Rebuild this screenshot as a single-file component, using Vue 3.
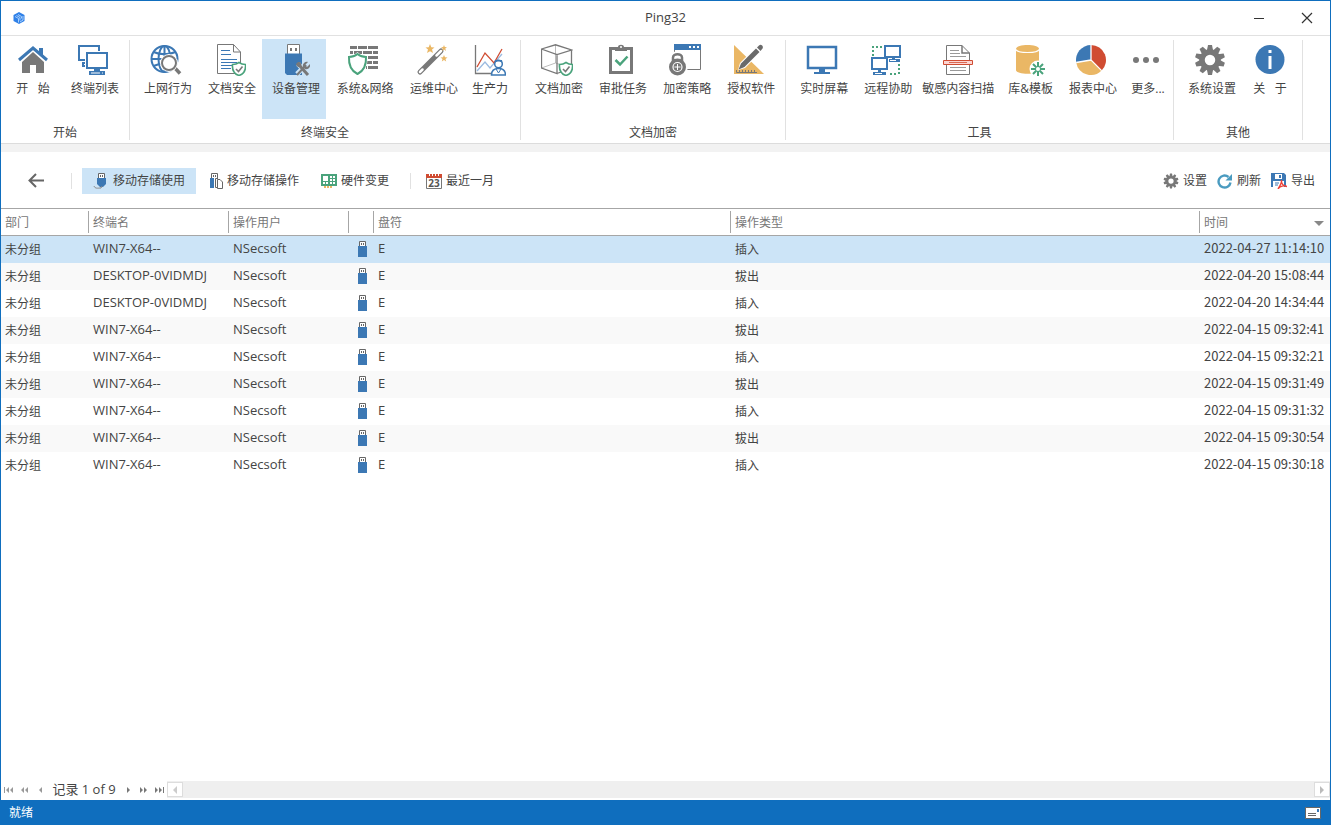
<template>
  <div class="window">
    <header class="title-bar">
      <svg class="logo" viewBox="0 0 16 16" v-html="icons.logo"></svg>
      <h1>Ping32</h1>
      <div class="window-actions">
        <button type="button" aria-label="最小化">
          <svg viewBox="0 0 12 12"><path d="M1 6.500H11" stroke="#333" /></svg>
        </button>
        <button type="button" aria-label="关闭">
          <svg viewBox="0 0 12 12"><path d="M1 1L11 11M11 1L1 11" stroke="#333" stroke-width="1.2" /></svg>
        </button>
      </div>
    </header>

    <nav class="ribbon">
      <section v-for="group in groups" :key="group.name" class="ribbon-group">
        <div class="ribbon-items">
          <button
            v-for="item in group.items"
            :key="item.label"
            type="button"
            class="ribbon-btn"
            :class="[item.kind, { active: activeMenu === item.label }]"
            @click="activeMenu = item.label"
          >
            <svg viewBox="0 0 32 32" v-html="icons[item.icon]"></svg>
            <span>{{ item.label }}</span>
          </button>
        </div>
        <div class="ribbon-caption">{{ group.name }}</div>
      </section>
    </nav>

    <main class="content">
      <div class="toolbar">
        <button type="button" class="back-btn" aria-label="返回">
          <svg viewBox="0 0 18 18"><path d="M17 8.500H3M9 2L2.500 8.500L9 15" fill="none" stroke="#666" stroke-width="2" /></svg>
        </button>
        <span class="divider"></span>
        <button
          v-for="tab in tabs"
          :key="tab.label"
          type="button"
          class="tool-btn"
          :class="{ active: activeTab === tab.label }"
          @click="activeTab = tab.label"
        >
          <svg viewBox="0 0 16 16" v-html="icons[tab.icon]"></svg>
          <span>{{ tab.label }}</span>
        </button>
        <span class="divider range-divider"></span>
        <button type="button" class="tool-btn">
          <svg viewBox="0 0 16 16" v-html="icons.calendar"></svg>
          <span>最近一月</span>
        </button>
        <div class="toolbar-right">
          <button v-for="action in actions" :key="action.label" type="button" class="tool-btn small">
            <svg :viewBox="action.box" v-html="icons[action.icon]"></svg>
            <span>{{ action.label }}</span>
          </button>
        </div>
      </div>

      <table class="records">
        <colgroup>
          <col class="col-dept" />
          <col class="col-host" />
          <col class="col-user" />
          <col class="col-icon" />
          <col class="col-drive" />
          <col />
          <col class="col-time" />
        </colgroup>
        <thead>
          <tr>
            <th><span>部门</span></th>
            <th><span>终端名</span></th>
            <th><span>操作用户</span></th>
            <th><span></span></th>
            <th><span>盘符</span></th>
            <th><span>操作类型</span></th>
            <th><span>时间<i class="sort"></i></span></th>
          </tr>
        </thead>
        <tbody>
          <tr
            v-for="(row, index) in rows"
            :key="row.time"
            :class="{ selected: selectedRow === index }"
            @click="selectedRow = index"
          >
            <td>未分组</td>
            <td class="latin">{{ row.host }}</td>
            <td class="latin">NSecsoft</td>
            <td class="usb-cell"><svg viewBox="0 0 9 16" v-html="icons.usb"></svg></td>
            <td class="latin">E</td>
            <td>{{ row.type }}</td>
            <td class="latin time">{{ row.time }}</td>
          </tr>
        </tbody>
      </table>
    </main>

    <div class="pager">
      <div class="pager-nav">
        <button v-for="nav in pagerBefore" :key="nav.label" type="button" :aria-label="nav.label">
          <svg viewBox="0 0 10 8"><path :d="nav.path" fill="#999" /></svg>
        </button>
        <span class="pager-text">记录 {{ selectedRow + 1 }} of {{ rows.length }}</span>
        <button v-for="nav in pagerAfter" :key="nav.label" type="button" :aria-label="nav.label">
          <svg viewBox="0 0 10 8"><path :d="nav.path" fill="#777" /></svg>
        </button>
      </div>
      <div class="scrollbar">
        <button type="button" aria-label="向左滚动">
          <svg viewBox="0 0 8 8"><path d="M6 0V8L2 4Z" fill="#ccc" /></svg>
        </button>
        <button type="button" aria-label="向右滚动">
          <svg viewBox="0 0 8 8"><path d="M2 0V8L6 4Z" fill="#bbb" /></svg>
        </button>
      </div>
    </div>

    <footer class="status-bar">
      <span>就绪</span>
      <svg viewBox="0 0 16 12" v-html="icons.card"></svg>
    </footer>
  </div>
</template>

<script setup>
import { ref } from 'vue';

const activeMenu = ref('设备管理');
const activeTab = ref('移动存储使用');
const selectedRow = ref(0);

const groups = [
  {
    name: '开始',
    items: [
      { label: '开   始', icon: 'home', kind: 'short' },
      { label: '终端列表', icon: 'terminals' }
    ]
  },
  {
    name: '终端安全',
    items: [
      { label: '上网行为', icon: 'web' },
      { label: '文档安全', icon: 'docSafe' },
      { label: '设备管理', icon: 'device' },
      { label: '系统&网络', icon: 'network', kind: 'wide' },
      { label: '运维中心', icon: 'wand' },
      { label: '生产力', icon: 'chart', kind: 'centered' }
    ]
  },
  {
    name: '文档加密',
    items: [
      { label: '文档加密', icon: 'cube' },
      { label: '审批任务', icon: 'clipboard' },
      { label: '加密策略', icon: 'policy' },
      { label: '授权软件', icon: 'license' }
    ]
  },
  {
    name: '工具',
    items: [
      { label: '实时屏幕', icon: 'screen' },
      { label: '远程协助', icon: 'remote' },
      { label: '敏感内容扫描', icon: 'scan', kind: 'long' },
      { label: '库&模板', icon: 'library' },
      { label: '报表中心', icon: 'pie' },
      { label: '更多...', icon: 'more', kind: 'compact' }
    ]
  },
  {
    name: '其他',
    items: [
      { label: '系统设置', icon: 'gear' },
      { label: '关   于', icon: 'about', kind: 'short' }
    ]
  }
];

const tabs = [
  { label: '移动存储使用', icon: 'usbPlug' },
  { label: '移动存储操作', icon: 'usbCopy' },
  { label: '硬件变更', icon: 'hardware' }
];

const actions = [
  { label: '设置', icon: 'gear', box: '0 0 32 32' },
  { label: '刷新', icon: 'refresh', box: '0 0 16 16' },
  { label: '导出', icon: 'export', box: '0 0 16 16' }
];

const rows = [
  { host: 'WIN7-X64--', type: '插入', time: '2022-04-27 11:14:10' },
  { host: 'DESKTOP-0VIDMDJ', type: '拔出', time: '2022-04-20 15:08:44' },
  { host: 'DESKTOP-0VIDMDJ', type: '插入', time: '2022-04-20 14:34:44' },
  { host: 'WIN7-X64--', type: '拔出', time: '2022-04-15 09:32:41' },
  { host: 'WIN7-X64--', type: '插入', time: '2022-04-15 09:32:21' },
  { host: 'WIN7-X64--', type: '拔出', time: '2022-04-15 09:31:49' },
  { host: 'WIN7-X64--', type: '插入', time: '2022-04-15 09:31:32' },
  { host: 'WIN7-X64--', type: '拔出', time: '2022-04-15 09:30:54' },
  { host: 'WIN7-X64--', type: '插入', time: '2022-04-15 09:30:18' }
];

const pagerBefore = [
  { label: '第一条', path: 'M0 1H1V7H0ZM5 1V7L2 4ZM9 1V7L6 4Z' },
  { label: '上一页', path: 'M4 1V7L1 4ZM8 1V7L5 4Z' },
  { label: '上一条', path: 'M6 1V7L3 4Z' }
];
const pagerAfter = [
  { label: '下一条', path: 'M5 1V7L8 4Z' },
  { label: '下一页', path: 'M2 1V7L5 4ZM6 1V7L9 4Z' },
  { label: '最后一条', path: 'M1 1V7L4 4ZM5 1V7L8 4ZM9 1H10V7H9Z' }
];

const blue = '#3c78b4';
const gray = '#787878';
const green = '#4aa37c';
const sand = '#eab765';
const red = '#d04c32';

const teeth = Array.from({ length: 10 }, (_, i) =>
  `<path d="M12.800 7L14 1H18L19.200 7Z" transform="rotate(${i * 36} 16 16)"/>`
).join('');

// small shield used as a badge on several icons
const badge = `<path d="M25 18.500C27 20 29 20.500 31.500 20.500C32 26 29.500 30 25 31.500C20.500 30 18 26 18.500 20.500C21 20.500 23 20 25 18.500Z" fill="#fff" stroke="${green}" stroke-width="1.600"/><path d="M22 25L24.500 27.500L28.500 22.500" fill="none" stroke="${gray}" stroke-width="1.600"/>`;

const icons = {
  logo: `<path d="M8 2L13.500 5V11L8 14L2.500 11V5Z" fill="#2f80e8"/><path d="M4 6.500L7.500 8.500V12.500M5.500 5.500L9 7.500V10.500M7 4.500L10.500 6.500V8.500M12 6V10L9 12" fill="none" stroke="#a9d0fb"/>`,
  home: `<path d="M5 18L16 8L27 18V29H19V21H13V29H5Z" fill="${gray}"/><path d="M2 16L16 4L30 16" fill="none" stroke="${blue}" stroke-width="3"/><path d="M22 4H26V12L22 9Z" fill="${blue}"/>`,
  terminals: `<path d="M8 16H2V2H22V7" fill="none" stroke="${blue}" stroke-width="2"/><path d="M8 19H6V22H8" fill="none" stroke="${blue}" stroke-width="2"/><path d="M10 9H30V24H10Z" fill="#fff" stroke="${blue}" stroke-width="2"/><path d="M17 24H23V27H28V31H12V27H17Z" fill="${blue}"/><path d="M14 29H26" stroke="#fff"/><circle cx="24" cy="29" r="1.200" fill="${blue}"/>`,
  web: `<g fill="none" stroke="${blue}" stroke-width="2"><circle cx="14.500" cy="15" r="13"/><ellipse cx="14.500" cy="15" rx="6" ry="13"/><path d="M1.500 15H27.500M3.500 8C10 11 19 11 25.500 8M3.500 22C8 20 13 19.500 18 20M14.500 2V28"/></g><path d="M24 23L30 29.500" stroke="${gray}" stroke-width="3.500"/><circle cx="19" cy="19" r="7.500" fill="#fff" stroke="#fff" stroke-width="3"/><circle cx="19" cy="19" r="7" fill="#fff" stroke="${gray}" stroke-width="2"/>`,
  docSafe: `<path d="M3.500 .5H19.500L26.500 8V29.500H3.500Z" fill="#fff" stroke="#777"/><path d="M19.500 .5V8H26.500" fill="none" stroke="#777"/><path d="M7 6.500H16M7 10.500H17M7 15.500H23M7 18.500H23M7 21.500H18M7 24.500H17" stroke="${blue}"/>${badge}`,
  device: `<path d="M9.500 11V.5H21.500V11" fill="#fff" stroke="${gray}"/><path d="M12 4H14V7H12ZM17 4H19V7H17Z" fill="${gray}"/><path d="M7 9.500H24V31H9L7 29Z" fill="${blue}"/><g stroke="#cce4f7" stroke-width="5" fill="none"><path d="M20 20L30 30M29 20L19 30"/></g><path d="M21 21L30 31" stroke="${gray}" stroke-width="3"/><path d="M28 21L19 31" stroke="${gray}" stroke-width="2"/><path d="M18 20L20 18C23 18 24 20 23 23L20 23C19 22 18 21 18 20Z" fill="${gray}"/><path d="M30 18L27 21L29 23L32 20C33 23 30 26 27 25L25 23C24 20 27 17 30 18Z" fill="${gray}"/>`,
  network: `<path d="M3 2H10V5H3ZM11 2H20V5H11ZM21 2H31V5H21ZM3 7H6V10H3ZM7 7H15V10H7ZM16 7H25V10H16ZM26 7H31V10H26ZM11 12H20V15H11ZM21 12H31V15H21ZM19 17H25V20H19ZM26 17H31V20H26ZM19 22H20V25H19ZM21 22H31V25H21Z" fill="${gray}"/><path d="M10.500 8C13 10.500 16 12 20.500 12C21 22 18 28 10.500 31C3 28 0 22 .5 12C5 12 8 10.500 10.500 8Z" fill="#fff"/><path d="M10.500 10C13 12 16 13 19 13C19.500 22 16.500 27 10.500 30C4.500 27 1.500 22 2 13C5 13 8 12 10.500 10Z" fill="#fff" stroke="${green}" stroke-width="2"/>`,
  wand: `<path d="M4 28L25 7" stroke="${gray}" stroke-width="5" stroke-linecap="round"/><path d="M4 28L6.500 25.500M20.500 11.500L25 7" stroke="#fff" stroke-width="2.500" stroke-linecap="round"/><g fill="${sand}"><path d="M14 0L15.300 3.200L18.500 3.500L16 5.600L17 9L14 7.200L11 9L12 5.600L9.500 3.500L12.700 3.200Z"/><path d="M28 1L28.800 3L31 3.200L29.300 4.600L30 7L28 5.600L26 7L26.700 4.600L25 3.200L27.200 3Z"/><path d="M28 11L29 13.200L31.500 13.500L29.500 15L30.200 17.500L28 16L25.800 17.500L26.500 15L24.500 13.500L27 13.200Z"/></g>`,
  chart: `<path d="M1.500 1V29.500H17" fill="none" stroke="${gray}" stroke-width="1.300"/><path d="M3 27L11 18L16 24L28 10" fill="none" stroke="#9cbbe0" stroke-width="1.300"/><path d="M3 23L11 9L20 19L28 5" fill="none" stroke="${red}" stroke-width="1.300"/><path d="M17.500 31C17.500 26 20 24.500 24.500 24.500C29 24.500 31.500 26 31.500 31Z" fill="#fff" stroke="${blue}" stroke-width="1.500"/><circle cx="24.500" cy="20" r="3.800" fill="#fff" stroke="${blue}" stroke-width="1.500"/><path d="M20.500 19C22 17 27 17 28.500 19L28 16H21Z" fill="${blue}"/><path d="M22 25L24.500 29L27 25" fill="none" stroke="${blue}"/>`,
  cube: `<path d="M14.500 1V19L.5 24M14.500 19L30 24" fill="none" stroke="#aaa" stroke-width=".8"/><path d="M.5 5L14.500 .8L30.500 6L16 10.500ZM.5 5V24L16 29.500V10.500M30.500 6V24L16 29.500" fill="none" stroke="${gray}" stroke-width="1.300"/>${badge}`,
  clipboard: `<path d="M5.500 4.500H26.500V28.500H5.500Z" fill="#fff" stroke="${gray}" stroke-width="3"/><path d="M10 7V3H13C13 0 19 0 19 3H22V7Z" fill="${gray}"/><circle cx="16" cy="3" r="1" fill="#fff"/><path d="M10.500 16L15 20.500L22.500 12.500" fill="none" stroke="${green}" stroke-width="2.500"/>`,
  policy: `<path d="M5.500 1V25.500H31.500V1" fill="#fff" stroke="${gray}"/><path d="M5 0H32V6H5Z" fill="${blue}"/><path d="M20 2H22V4H20ZM24 2H26V4H24ZM28 2H30V4H28Z" fill="#fff"/><circle cx="8.500" cy="22.500" r="10.500" fill="#fff"/><path d="M4 17V13C4 8.500 13 8.500 13 13V17" fill="none" stroke="#fff" stroke-width="5"/><path d="M4 17V13.500C4 9 13 9 13 13.500V17" fill="none" stroke="${gray}" stroke-width="2.500"/><circle cx="8.500" cy="23" r="8.500" fill="${gray}"/><circle cx="8.500" cy="23" r="4.500" fill="none" stroke="#fff" stroke-width="1.200"/><path d="M8.500 20V26M5.500 23H11.500" stroke="#fff"/>`,
  license: `<path d="M1 1V30H31Z" fill="${sand}"/><path d="M3.500 26V28.500H24M6.500 26V28M9.500 26V28M12.500 26V28M15.500 26V28M18.500 26V28M21.500 26V28" fill="none" stroke="${gray}"/><path d="M5 26L7 19L25 1L30 6L12 24Z" fill="#fff"/><path d="M5.500 25.500L8 19.500L23 4.500L26.500 8L11.500 23Z" fill="#6a6a6a"/><path d="M24 3.500L26 1.500C28 -.5 31 2.500 29.500 4.500L27.500 7Z" fill="#6a6a6a"/>`,
  screen: `<path d="M2 3H30V24H2Z" fill="#fff" stroke="${blue}" stroke-width="2.500"/><path d="M13 25H19V28H24V30H8V28H13Z" fill="${blue}"/>`,
  remote: `<g fill="none" stroke="${blue}" stroke-width="2"><path d="M15 2H30V13H15Z"/><path d="M2 14H17V25H2Z" fill="#fff"/></g><path d="M19 15H30V18H19ZM22 14H25V16H22ZM8 26H11V28H8ZM3 28H16V31H3Z" fill="${blue}"/><path d="M5 29.500H12M20 16.500H26" stroke="#fff"/><path d="M2 3H14M3 6V13" stroke="${green}" stroke-width="2" stroke-dasharray="2 2"/><path d="M29 20V31M20 30H28" stroke="${green}" stroke-width="2" stroke-dasharray="2 2"/>`,
  scan: `<path d="M4.500 1.500H20L27.500 9V30.500H4.500Z" fill="#fff" stroke="${gray}"/><path d="M20 1.500V9H27.500" fill="none" stroke="${gray}" stroke-width="1.500"/><path d="M8 6.500H17M8 9.500H18M8 12.500H24M8 23.500H24M8 26.500H24" stroke="#999"/><path d="M1.500 16.500H30.500V20.500H1.500Z" fill="#fcd5d2" stroke="${red}"/><path d="M7 18.500H25" stroke="${red}" stroke-width=".8"/>`,
  library: `<path d="M3 5C3 -.2 26 -.2 26 5V26C26 31 3 31 3 26Z" fill="${sand}"/><path d="M3 5.500C4 9.500 25 9.500 26 5.500" fill="none" stroke="#fff" stroke-width="1.200"/><circle cx="25" cy="25" r="8.500" fill="#fff"/><path d="M25 18V32M18 25H32M20 20L30 30M30 20L20 30" stroke="${green}" stroke-width="2"/><circle cx="25" cy="25" r="2" fill="#fff"/>`,
  pie: `<path d="M16 16V1A15 15 0 0 1 26.600 26.600Z" fill="${red}"/><path d="M16 16L26.600 26.600A15 15 0 0 1 1.200 18.500Z" fill="${sand}"/><path d="M16 16L1.200 18.500A15 15 0 0 1 16 1Z" fill="${blue}"/><path d="M16 1V16L26.600 26.600M16 16L1.200 18.500" fill="none" stroke="#fff" stroke-width="1.300"/>`,
  more: `<g fill="${gray}"><circle cx="6" cy="16" r="3"/><circle cx="16" cy="16" r="3"/><circle cx="26" cy="16" r="3"/></g>`,
  gear: `<g fill="${gray}">${teeth}</g><circle cx="16" cy="16" r="8" fill="none" stroke="${gray}" stroke-width="5.500"/>`,
  about: `<circle cx="16" cy="15.500" r="14.500" fill="${blue}"/><path d="M14.500 6H17.500V9H14.500ZM14.500 12H17.500V25H14.500Z" fill="#fff"/>`,
  usb: `<path d="M1.500 6V.5H7.500V6" fill="#fff" stroke="#666"/><path d="M3 2H4V4H3ZM5 2H6V4H5Z" fill="#666"/><path d="M0 5H9V16H0Z" fill="${blue}"/>`,
  usbPlug: `<path d="M5.500 6V.5H11.500V6" fill="#fff" stroke="#666"/><path d="M7 2H8V4H7ZM9 2H10V4H9Z" fill="#666"/><path d="M4 5H13V11L10 14H7L4 11Z" fill="${blue}"/><path d="M1 13C2 16 5 15 8 15L9 13" fill="none" stroke="#888"/>`,
  usbCopy: `<path d="M4.500 6V.5H10.500V6" fill="#fff" stroke="#666"/><path d="M6 2H7V4H6ZM8 2H9V4H8Z" fill="#666"/><path d="M3 5H9V15H3Z" fill="${blue}"/><path d="M7 5H16V16H7Z" fill="#fff"/><path d="M10 14.500H8.500V5.500H11M10.500 6.500H13L15.500 9V15.500H10.500Z" fill="#fff" stroke="#666"/>`,
  hardware: `<path d="M0 1H16V13H0Z" fill="${green}"/><path d="M2 3H7V8H2ZM9 3H11V5H9ZM12 3H14V5H12ZM9 6H11V8H9ZM12 6H14V8H12ZM2 9H4V11H2ZM5 9H7V11H5ZM9 9H11V11H9ZM12 9H14V11H12Z" fill="#fff"/><path d="M3 13H5V15H3ZM6 13H8V15H6ZM9 13H11V15H9Z" fill="${sand}"/>`,
  calendar: `<path d="M.5 3.500H15.500V15.500H.5Z" fill="#fff" stroke="#777"/><path d="M0 1H16V5H0Z" fill="${red}"/><path d="M3.500 0V3M6.500 0V3M9.500 0V3M12.500 0V3" stroke="#fff"/><text x="8" y="14" text-anchor="middle" font-family="Open Sans, sans-serif" font-size="10" font-weight="700" fill="#555">23</text>`,
  refresh: `<path d="M13.500 9.500A6 6 0 1 1 11.500 4" fill="none" stroke="#4a9bc0" stroke-width="2.400"/><path d="M15 1V7.500H8.500Z" fill="#4a9bc0"/>`,
  export: `<path d="M0 0H13L15 2V14H0Z" fill="${blue}"/><path d="M4 1H11V6H4Z" fill="#fff"/><path d="M8 2H10V5H8Z" fill="${blue}"/><path d="M2 8H13V14H2Z" fill="#fff"/><path d="M4 10H8M4 12H7" stroke="${blue}"/><path d="M7 16C9 13 11 10 10.500 7C10 11 13 13 16 13.500C13 12 9 13 7 16Z" fill="#fff" stroke="#ee4036" stroke-width="1.400"/>`,
  card: `<path d="M.5 .5H15.500V11.500H.5Z" fill="#fff" stroke="#666"/><path d="M12 2H14V5H12Z" fill="${blue}"/><path d="M3 6.500H11M3 8.500H11" stroke="#666"/>`
};
</script>

<style>
body {
  margin: 0;
}
</style>

<style scoped>
.window {
  display: flex;
  flex-direction: column;
  box-sizing: border-box;
  min-height: 100vh;
  border: 1px solid #0f6ebe;
  border-bottom: none;
  background: #fff;
  color: #444;
  font-family: "Open Sans", "Noto Sans CJK SC", sans-serif;
  font-size: 12px;
  line-height: 16px;
}

button {
  margin: 0;
  padding: 0;
  border: none;
  background: none;
  color: inherit;
  font: inherit;
  cursor: pointer;
}

svg {
  display: block;
}

.title-bar {
  display: grid;
  grid-template-columns: 1fr auto 1fr;
  align-items: center;
  height: 34px;
  border-bottom: 1px solid #e1e1e1;
}

.logo {
  width: 16px;
  height: 16px;
  margin-left: 10px;
}

.title-bar h1 {
  margin: 0;
  padding-bottom: 2px;
  font-size: 13px;
  font-weight: 400;
}

.window-actions {
  display: flex;
  justify-content: flex-end;
  gap: 2px;
}

.window-actions button {
  display: flex;
  align-items: center;
  justify-content: center;
  width: 46px;
  height: 34px;
}

.window-actions svg {
  width: 12px;
  height: 12px;
}

.ribbon {
  display: flex;
  height: 107px;
  border-bottom: 1px solid #dcdcdc;
}

.ribbon-group {
  height: 100px;
  margin-top: 4px;
  padding: 0 4px;
  border-right: 1px solid #e1e1e1;
  box-sizing: border-box;
}

.ribbon-items {
  display: flex;
  height: 80px;
  margin-top: -1px;
}

.ribbon-btn {
  display: flex;
  flex-direction: column;
  align-items: center;
  padding: 5px 6px 0;
  white-space: pre;
}

.ribbon-btn svg {
  width: 32px;
  height: 32px;
}

.ribbon-btn span {
  margin-top: 5px;
  padding-left: 4px;
}

.ribbon-btn.short {
  width: 56px;
}

.ribbon-btn.wide {
  width: 74px;
}

.ribbon-btn.centered {
  padding: 5px 8px 0;
}

.ribbon-btn.long,
.ribbon-btn.compact {
  padding: 5px 4px 0;
}

.ribbon-btn.compact {
  width: 46px;
}

.ribbon-btn.short span,
.ribbon-btn.centered span,
.ribbon-btn.long span {
  padding-left: 0;
}

.active {
  background: #cce4f7;
}

.ribbon-caption {
  margin-top: 6px;
  text-align: center;
}

.content {
  flex: 1;
  border-top: 8px solid #f2f2f2;
}

.toolbar {
  display: flex;
  align-items: center;
  box-sizing: border-box;
  height: 56px;
  padding: 2px 10px 0 26px;
}

.toolbar svg {
  flex: none;
  width: 16px;
  height: 16px;
}

.toolbar .back-btn svg {
  width: 18px;
  height: 18px;
}

.divider {
  width: 1px;
  height: 16px;
  margin: 0 10px 0 26px;
  background: #e1e1e1;
}

.range-divider {
  margin: 0 4px 0 10px;
}

.tool-btn {
  display: flex;
  align-items: center;
  gap: 4px;
  height: 26px;
  padding: 0 11px;
  white-space: nowrap;
}

.toolbar-right {
  display: flex;
  margin-left: auto;
}

.tool-btn.small {
  padding: 0 5px;
}

.records {
  width: 100%;
  border-collapse: separate;
  border-spacing: 0;
  table-layout: fixed;
}

.col-dept {
  width: 88px;
}

.col-host {
  width: 140px;
}

.col-user {
  width: 120px;
}

.col-icon {
  width: 25px;
}

.col-drive {
  width: 357px;
}

.col-time {
  width: 130px;
}

.records th {
  height: 26px;
  padding: 0;
  border-top: 1px solid #a6a6a6;
  border-bottom: 1px solid #a6a6a6;
  color: #777;
  font-weight: 400;
  text-align: left;
}

.records th span {
  display: flex;
  align-items: center;
  justify-content: space-between;
  box-sizing: border-box;
  height: 22px;
  padding: 2px 6px 0 4px;
  border-right: 1px solid #a6a6a6;
}

.records th:last-child span {
  border-right: none;
}

.sort {
  border: 5px solid transparent;
  border-top-color: #888;
  border-bottom: none;
}

.records td {
  box-sizing: border-box;
  height: 27px;
  padding: 0 0 0 4px;
  white-space: nowrap;
}

.records .latin {
  padding-bottom: 3px;
  font-size: 13px;
}

.records .time {
  font-family: "Noto Sans CJK SC", sans-serif;
}

.records .usb-cell {
  padding: 0 0 2px 9px;
}

.usb-cell svg {
  width: 9px;
  height: 16px;
}

.records tbody tr:nth-child(even) {
  background: #f9f9f9;
}

.records tbody tr.selected {
  background: #cce4f7;
}

.pager {
  display: flex;
  height: 19px;
}

.pager-nav {
  display: flex;
  align-items: center;
  gap: 6px;
  width: 166px;
  height: 17px;
  box-sizing: border-box;
  padding: 0 3px;
}

.pager-text {
  flex: 1;
  padding-bottom: 2px;
  font-size: 13px;
  white-space: nowrap;
  text-align: center;
}

.pager-nav svg {
  width: 10px;
  height: 8px;
}

.scrollbar {
  display: flex;
  flex: 1;
  align-items: center;
  justify-content: space-between;
  height: 17px;
  background: #efefef;
}

.scrollbar button {
  display: flex;
  align-items: center;
  justify-content: center;
  width: 16px;
  height: 15px;
  border: 1px solid #ddd;
  background: #fff;
}

.scrollbar svg {
  width: 8px;
  height: 8px;
}

.status-bar {
  display: flex;
  align-items: center;
  justify-content: space-between;
  height: 25px;
  padding: 0 9px 0 8px;
  background: #0f6ebe;
  color: #fff;
}

.status-bar svg {
  width: 16px;
  height: 12px;
}
</style>
